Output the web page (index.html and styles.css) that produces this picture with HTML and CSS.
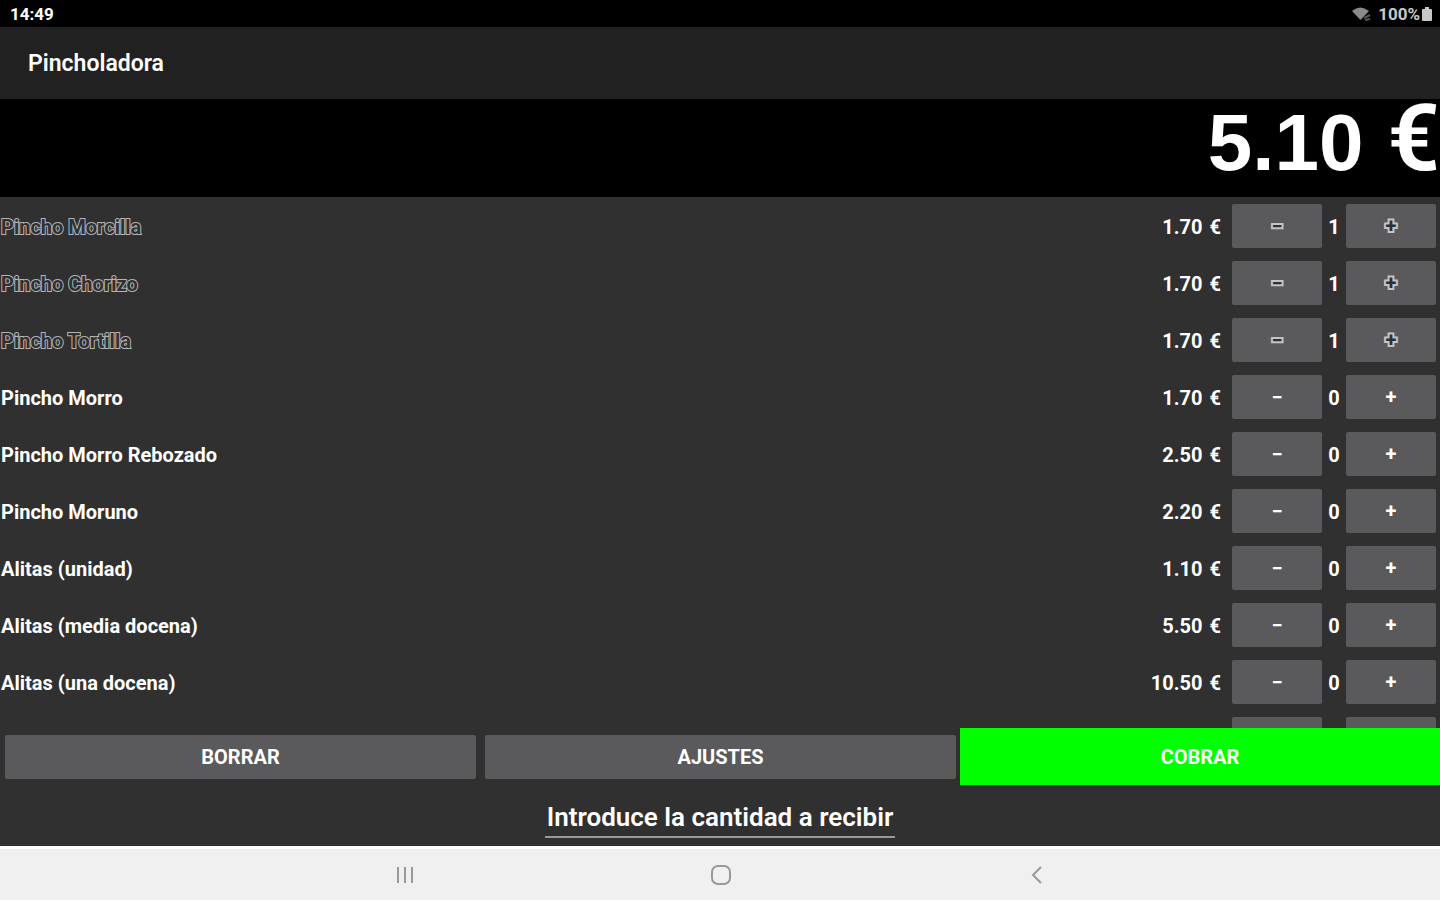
FILE: index.html
```
<!DOCTYPE html>
<html lang="es">
<head>
	<meta charset="utf-8">
	<title>Pincholadora</title>
	<link rel="stylesheet" href="styles.css">
</head>
<body>
	<div class="status-bar">
		<span>14:49</span>
		<div class="status-right">
			<svg class="wifi" width="20" height="14" viewBox="0 0 20 14">
				<path d="M0 4 Q8 -3 17 4 L8.500 13 Z" fill="#8a8a8a"/>
				<path d="M12 11 L18 8 M13 13 L18 12" stroke="#555" stroke-width="2"/>
			</svg>
			<span>100%</span>
			<svg width="10" height="14" viewBox="0 0 10 14">
				<path d="M3 0 H7 V2 H9 Q10 2 10 3 V13 Q10 14 9 14 H1 Q0 14 0 13 V3 Q0 2 1 2 H3 Z" fill="#c8c8c8"/>
			</svg>
		</div>
	</div>

	<header class="app-bar">
		<h1>Pincholadora</h1>
	</header>

	<div class="total"><span class="total-digits">5.10</span><span class="total-euro">€</span></div>

	<main class="items">
		<div class="item selected">
			<span class="item-name">Pincho Morcilla</span>
			<span class="item-price">1.70 <span>€</span></span>
			<button class="btn">−</button>
			<span class="item-count">1</span>
			<button class="btn">+</button>
		</div>
		<div class="item selected">
			<span class="item-name">Pincho Chorizo</span>
			<span class="item-price">1.70 <span>€</span></span>
			<button class="btn">−</button>
			<span class="item-count">1</span>
			<button class="btn">+</button>
		</div>
		<div class="item selected">
			<span class="item-name">Pincho Tortilla</span>
			<span class="item-price">1.70 <span>€</span></span>
			<button class="btn">−</button>
			<span class="item-count">1</span>
			<button class="btn">+</button>
		</div>
		<div class="item">
			<span class="item-name">Pincho Morro</span>
			<span class="item-price">1.70 <span>€</span></span>
			<button class="btn">−</button>
			<span class="item-count">0</span>
			<button class="btn">+</button>
		</div>
		<div class="item">
			<span class="item-name">Pincho Morro Rebozado</span>
			<span class="item-price">2.50 <span>€</span></span>
			<button class="btn">−</button>
			<span class="item-count">0</span>
			<button class="btn">+</button>
		</div>
		<div class="item">
			<span class="item-name">Pincho Moruno</span>
			<span class="item-price">2.20 <span>€</span></span>
			<button class="btn">−</button>
			<span class="item-count">0</span>
			<button class="btn">+</button>
		</div>
		<div class="item">
			<span class="item-name">Alitas (unidad)</span>
			<span class="item-price">1.10 <span>€</span></span>
			<button class="btn">−</button>
			<span class="item-count">0</span>
			<button class="btn">+</button>
		</div>
		<div class="item">
			<span class="item-name">Alitas (media docena)</span>
			<span class="item-price">5.50 <span>€</span></span>
			<button class="btn">−</button>
			<span class="item-count">0</span>
			<button class="btn">+</button>
		</div>
		<div class="item">
			<span class="item-name">Alitas (una docena)</span>
			<span class="item-price">10.50 <span>€</span></span>
			<button class="btn">−</button>
			<span class="item-count">0</span>
			<button class="btn">+</button>
		</div>
		<div class="item">
			<span class="item-name"></span>
			<span class="item-price"></span>
			<button class="btn"></button>
			<span class="item-count"></span>
			<button class="btn"></button>
		</div>
	</main>

	<div class="actions">
		<button class="btn">BORRAR</button>
		<button class="btn">AJUSTES</button>
		<button class="btn-pay">COBRAR</button>
	</div>

	<div class="amount">
		<input type="text" class="amount-input" placeholder="Introduce la cantidad a recibir" aria-label="Introduce la cantidad a recibir">
	</div>

	<nav class="nav-bar">
		<button class="nav-btn" aria-label="Recientes">
			<svg width="22" height="22" viewBox="0 0 22 22">
				<path d="M4 3 V19 M11 3 V19 M18 3 V19" stroke="#999" stroke-width="2"/>
			</svg>
		</button>
		<button class="nav-btn" aria-label="Inicio">
			<svg width="22" height="22" viewBox="0 0 22 22">
				<rect x="2" y="2" width="18" height="18" rx="6" fill="none" stroke="#999" stroke-width="2"/>
			</svg>
		</button>
		<button class="nav-btn" aria-label="Atrás">
			<svg width="22" height="22" viewBox="0 0 22 22">
				<path d="M15 3 L7 11 L15 19" fill="none" stroke="#999" stroke-width="2"/>
			</svg>
		</button>
	</nav>
</body>
</html>
```
FILE: styles.css
```
* {
	box-sizing: border-box;
}
body {
	margin: 0;
	height: 100vh;
	display: flex;
	flex-direction: column;
	overflow: hidden;
	background-color: #303030;
	color: #fff;
	font-family: Roboto, sans-serif;
	font-size: 20px;
	font-weight: 700;
}
button, input {
	font: inherit;
	color: inherit;
	border: none;
	padding: 0;
}
.status-bar {
	display: flex;
	justify-content: space-between;
	align-items: center;
	height: 27px;
	padding: 0 8px 0 10px;
	background-color: #000;
	font-size: 17px;
}
.status-right {
	display: flex;
	align-items: center;
	gap: 2px;
	color: #c8c8c8;
}
.wifi {
	margin-right: 4px;
}
.app-bar {
	display: flex;
	align-items: center;
	height: 72px;
	padding-left: 28px;
	background-color: #212121;
}
h1 {
	margin: 0;
	font-size: 23px;
	font-weight: 600;
}
.total {
	display: flex;
	justify-content: flex-end;
	align-items: baseline;
	gap: 24px;
	height: 98px;
	background-color: #000;
	font-size: 92px;
	font-weight: 600;
	line-height: 80px;
}
.total-digits {
	font-family: "Liberation Sans", sans-serif;
	font-size: 80px;
}
.items {
	flex: 1;
	min-height: 0;
	overflow: hidden;
}
.item {
	display: grid;
	grid-template-columns: 1fr auto 90px 24px 90px;
	align-items: center;
	height: 57px;
	padding: 0 4px 0 1px;
}
.item-name, .item-price, .item-count {
	padding-top: 2px;
}
.item-price {
	margin-right: 11px;
}
.item-price span {
	margin-left: 2px;
}
.item-count {
	text-align: center;
}
.btn {
	height: 44px;
	border-radius: 2px;
	background-color: #5a5a5c;
}
.selected .item-name, .selected .btn {
	color: #303030;
	-webkit-text-stroke: 2px #b4b4b4;
	paint-order: stroke fill;
}
.selected .btn {
	-webkit-text-stroke: 4px #c4c4c4;
}
.actions {
	display: grid;
	grid-template-columns: 1fr 1fr 1fr;
	align-items: center;
	height: 57px;
}
.actions .btn {
	margin: 0 4px 0 5px;
}
.btn-pay {
	height: 100%;
	background-color: #00ff00;
}
.amount {
	display: flex;
	justify-content: center;
	height: 61px;
	padding-top: 10px;
}
.amount-input {
	width: 350px;
	height: 43px;
	padding-top: 2px;
	border-bottom: 2px solid #999;
	background: none;
	font-size: 26px;
	font-weight: 600;
	text-align: center;
}
.amount-input::placeholder {
	color: #fff;
}
.nav-bar {
	display: flex;
	justify-content: center;
	align-items: center;
	gap: 294px;
	height: 54px;
	padding-left: 2px;
	border-top: 3px solid #fff;
	background-color: #f0f0f0;
}
.nav-btn {
	width: 22px;
	height: 22px;
	background: none;
}
```
